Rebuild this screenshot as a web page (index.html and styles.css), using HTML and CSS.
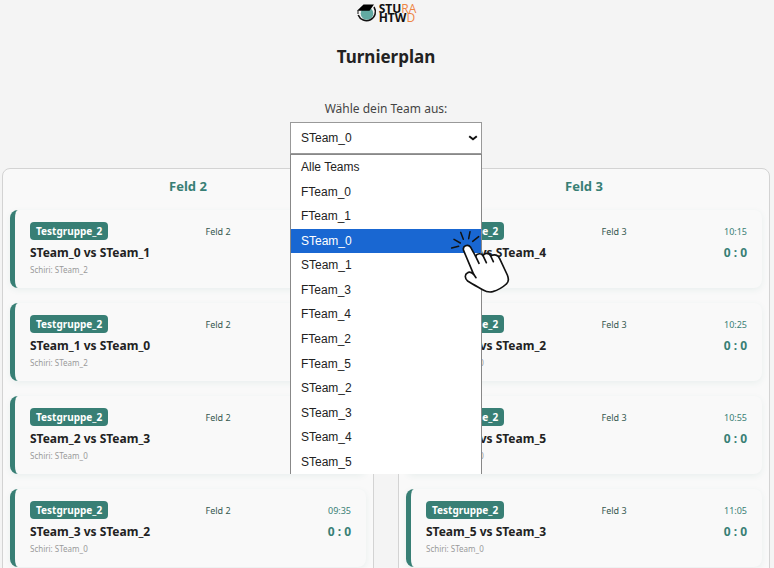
FILE: index.html
```html
<!DOCTYPE html>
<html lang="de">
<head>
<meta charset="utf-8">
<meta name="viewport" content="width=device-width, initial-scale=1">
<title>Turnierplan</title>
<link rel="stylesheet" href="styles.css">
</head>
<body>
<header class="header">
  <div class="logo">
    <svg class="logo-mark" viewBox="0 0 22 20" aria-hidden="true">
      <circle cx="11" cy="10.500" r="6.300" fill="#62aaa2"/>
      <path d="M18 4A8.900 8.900 0 1 1 2.200 12" fill="none" stroke="#111" stroke-width="1.600"/>
      <path d="M7.500 1.500H18L13.500 7.800H1Z" fill="#000"/>
      <path d="M2 7.500v3.500" stroke="#111" stroke-width="1"/>
    </svg>
    <div class="logo-text">
      <span>STU<span class="logo-accent">RA</span></span>
      <span>HTW<span class="logo-accent">D</span></span>
    </div>
  </div>
  <h1 class="title">Turnierplan</h1>
</header>

<main>
  <div class="picker">
    <label class="picker-label" for="team">Wähle dein Team aus:</label>
    <div class="picker-box">
      <select class="picker-select" id="team">
        <option>Alle Teams</option>
        <option>FTeam_0</option>
        <option>FTeam_1</option>
        <option selected>STeam_0</option>
        <option>STeam_1</option>
        <option>FTeam_3</option>
        <option>FTeam_4</option>
        <option>FTeam_2</option>
        <option>FTeam_5</option>
        <option>STeam_2</option>
        <option>STeam_3</option>
        <option>STeam_4</option>
        <option>STeam_5</option>
      </select>
      <svg class="picker-arrow" viewBox="0 0 10 6" aria-hidden="true"><path d="M1.200 1.200L5 4.300L8.800 1.200" fill="none" stroke="#111" stroke-width="2"/></svg>
      <ul class="menu" role="listbox" aria-label="Teams">
        <li role="option">Alle Teams</li>
        <li role="option">FTeam_0</li>
        <li role="option">FTeam_1</li>
        <li role="option" class="active" aria-selected="true">STeam_0</li>
        <li role="option">STeam_1</li>
        <li role="option">FTeam_3</li>
        <li role="option">FTeam_4</li>
        <li role="option">FTeam_2</li>
        <li role="option">FTeam_5</li>
        <li role="option">STeam_2</li>
        <li role="option">STeam_3</li>
        <li role="option">STeam_4</li>
        <li role="option">STeam_5</li>
      </ul>
      <svg class="hand" viewBox="0 0 180 195" aria-hidden="true">
        <g fill="none" stroke="#111" stroke-width="4.500" stroke-linecap="round">
          <path d="M5 54L26 49M12 28L31 39M32 7L40 28M60 5L56 26M86 20L68 34"/>
        </g>
        <path d="M41 62C36 48 54 40 62 52L77 79C81 69 94 69 99 77C104 67 117 68 122 78C133 71 145 75 149 86L172 135C177 147 176 156 169 162C157 173 145 180 128 185C116 188 108 185 98 179C84 171 68 163 53 153C44 146 43 133 53 128C58 125 64 127 71 133Z" fill="#fff" stroke="#111" stroke-width="5" stroke-linejoin="round"/>
        <path d="M77 79L87 100M99 77L109 98M122 78L130 95M71 133L78 143" fill="none" stroke="#111" stroke-width="5" stroke-linecap="round"/>
      </svg>
    </div>
  </div>

  <div class="fields">
    <section class="field">
      <h2 class="field-title">Feld 2</h2>
      <article class="match">
        <div class="row"><span class="badge">Testgruppe_2</span><span class="place">Feld 2</span><time class="time">10:15</time></div>
        <div class="row"><span class="teams">STeam_0 vs STeam_1</span><span class="score">0 : 0</span></div>
        <div class="referee">Schiri: STeam_2</div>
      </article>
      <article class="match">
        <div class="row"><span class="badge">Testgruppe_2</span><span class="place">Feld 2</span><time class="time">10:25</time></div>
        <div class="row"><span class="teams">STeam_1 vs STeam_0</span><span class="score">0 : 0</span></div>
        <div class="referee">Schiri: STeam_2</div>
      </article>
      <article class="match">
        <div class="row"><span class="badge">Testgruppe_2</span><span class="place">Feld 2</span><time class="time">10:55</time></div>
        <div class="row"><span class="teams">STeam_2 vs STeam_3</span><span class="score">0 : 0</span></div>
        <div class="referee">Schiri: STeam_0</div>
      </article>
      <article class="match">
        <div class="row"><span class="badge">Testgruppe_2</span><span class="place">Feld 2</span><time class="time">09:35</time></div>
        <div class="row"><span class="teams">STeam_3 vs STeam_2</span><span class="score">0 : 0</span></div>
        <div class="referee">Schiri: STeam_0</div>
      </article>
    </section>
    <section class="field">
      <h2 class="field-title">Feld 3</h2>
      <article class="match">
        <div class="row"><span class="badge">Testgruppe_2</span><span class="place">Feld 3</span><time class="time">10:15</time></div>
        <div class="row"><span class="teams">STeam_0 vs STeam_4</span><span class="score">0 : 0</span></div>
        <div class="referee">Schiri: STeam_0</div>
      </article>
      <article class="match">
        <div class="row"><span class="badge">Testgruppe_2</span><span class="place">Feld 3</span><time class="time">10:25</time></div>
        <div class="row"><span class="teams">STeam_4 vs STeam_2</span><span class="score">0 : 0</span></div>
        <div class="referee">Schiri: STeam_0</div>
      </article>
      <article class="match">
        <div class="row"><span class="badge">Testgruppe_2</span><span class="place">Feld 3</span><time class="time">10:55</time></div>
        <div class="row"><span class="teams">STeam_4 vs STeam_5</span><span class="score">0 : 0</span></div>
        <div class="referee">Schiri: STeam_0</div>
      </article>
      <article class="match">
        <div class="row"><span class="badge">Testgruppe_2</span><span class="place">Feld 3</span><time class="time">11:05</time></div>
        <div class="row"><span class="teams">STeam_5 vs STeam_3</span><span class="score">0 : 0</span></div>
        <div class="referee">Schiri: STeam_0</div>
      </article>
    </section>
  </div>
</main>
</body>
</html>
```
FILE: styles.css
```css
* {
  box-sizing: border-box;
}

html {
  scrollbar-width: none;
}

body {
  margin: 0;
  padding: 3px 4px 0 2px;
  background: #f4f4f4;
  color: #222;
  font-family: "Noto Sans", "Open Sans", sans-serif;
  font-size: 12px;
}

.header {
  display: flex;
  flex-direction: column;
  align-items: center;
}

.logo {
  display: flex;
  align-items: center;
  gap: 1px;
  height: 20px;
}

.logo-mark {
  width: 22px;
  height: 20px;
}

.logo-text {
  display: flex;
  flex-direction: column;
  font: bold 12px/9px "Open Sans", sans-serif;
  color: #111;
}

.logo-accent {
  color: #ee8544;
  font-weight: 500;
}

.title {
  margin: 22px 0 0;
  font-size: 17px;
  line-height: 24px;
}

.picker {
  display: flex;
  flex-direction: column;
  align-items: center;
  margin-top: 30px;
}

.picker-label {
  color: #444;
  line-height: 20px;
}

.picker-box {
  position: relative;
  width: 192px;
  margin-top: 3px;
}

.picker-select {
  display: block;
  width: 100%;
  height: 32px;
  padding: 0 10px;
  appearance: none;
  border: 1px solid #999;
  border-radius: 0;
  background: #fff;
  color: #222;
  font: 12px "Liberation Sans", sans-serif;
}

.picker-arrow {
  position: absolute;
  top: 13px;
  right: 4px;
  width: 10px;
  height: 6px;
}

.menu {
  position: absolute;
  z-index: 1;
  top: 100%;
  left: 0;
  right: 0;
  display: grid;
  grid-auto-rows: 1fr;
  height: 320px;
  margin: 0;
  padding: 0;
  border: 1px solid #888;
  border-bottom: 0;
  background: #fff;
  color: #222;
  font: 12px "Liberation Sans", sans-serif;
  list-style: none;
}

.menu li {
  display: flex;
  align-items: center;
  padding: 0 10px;
}

.menu .active {
  background: #1967d2;
  color: #fff;
}

.hand {
  position: absolute;
  z-index: 2;
  top: 108px;
  left: 160px;
  width: 60px;
  height: 65px;
}

.fields {
  display: grid;
  grid-template-columns: 1fr 1fr;
  gap: 24px;
  margin-top: 14px;
}

.field {
  display: flex;
  flex-direction: column;
  gap: 15px;
  padding: 8px 7px 15px;
  border: 1px solid #d3d3d3;
  border-radius: 8px;
  background: #f9f9f9;
}

.field-title {
  margin: 0;
  color: #387f75;
  font-size: 13px;
  line-height: 18px;
  text-align: center;
}

.match {
  display: flex;
  flex-direction: column;
  height: 78px;
  padding: 12px 15px 0;
  border-left: 5px solid #387f75;
  border-radius: 8px;
  background: #f9f9f9;
  box-shadow: 0 2px 6px rgba(56, 127, 117, 0.08);
}

.row {
  display: flex;
  align-items: center;
  justify-content: space-between;
}

.row + .row {
  margin-top: 3px;
}

.badge {
  padding: 0 6px;
  border-radius: 4px;
  background: #387f75;
  color: #fff;
  font-size: 10px;
  font-weight: 700;
  line-height: 18px;
}

.place {
  color: #35584f;
  font-size: 9px;
}

.time {
  color: #387f75;
  font-size: 9px;
}

.teams,
.score {
  font-weight: 700;
  line-height: 20px;
}

.score {
  color: #387f75;
}

.referee {
  color: #999;
  font-size: 8px;
  line-height: 14px;
}
```
